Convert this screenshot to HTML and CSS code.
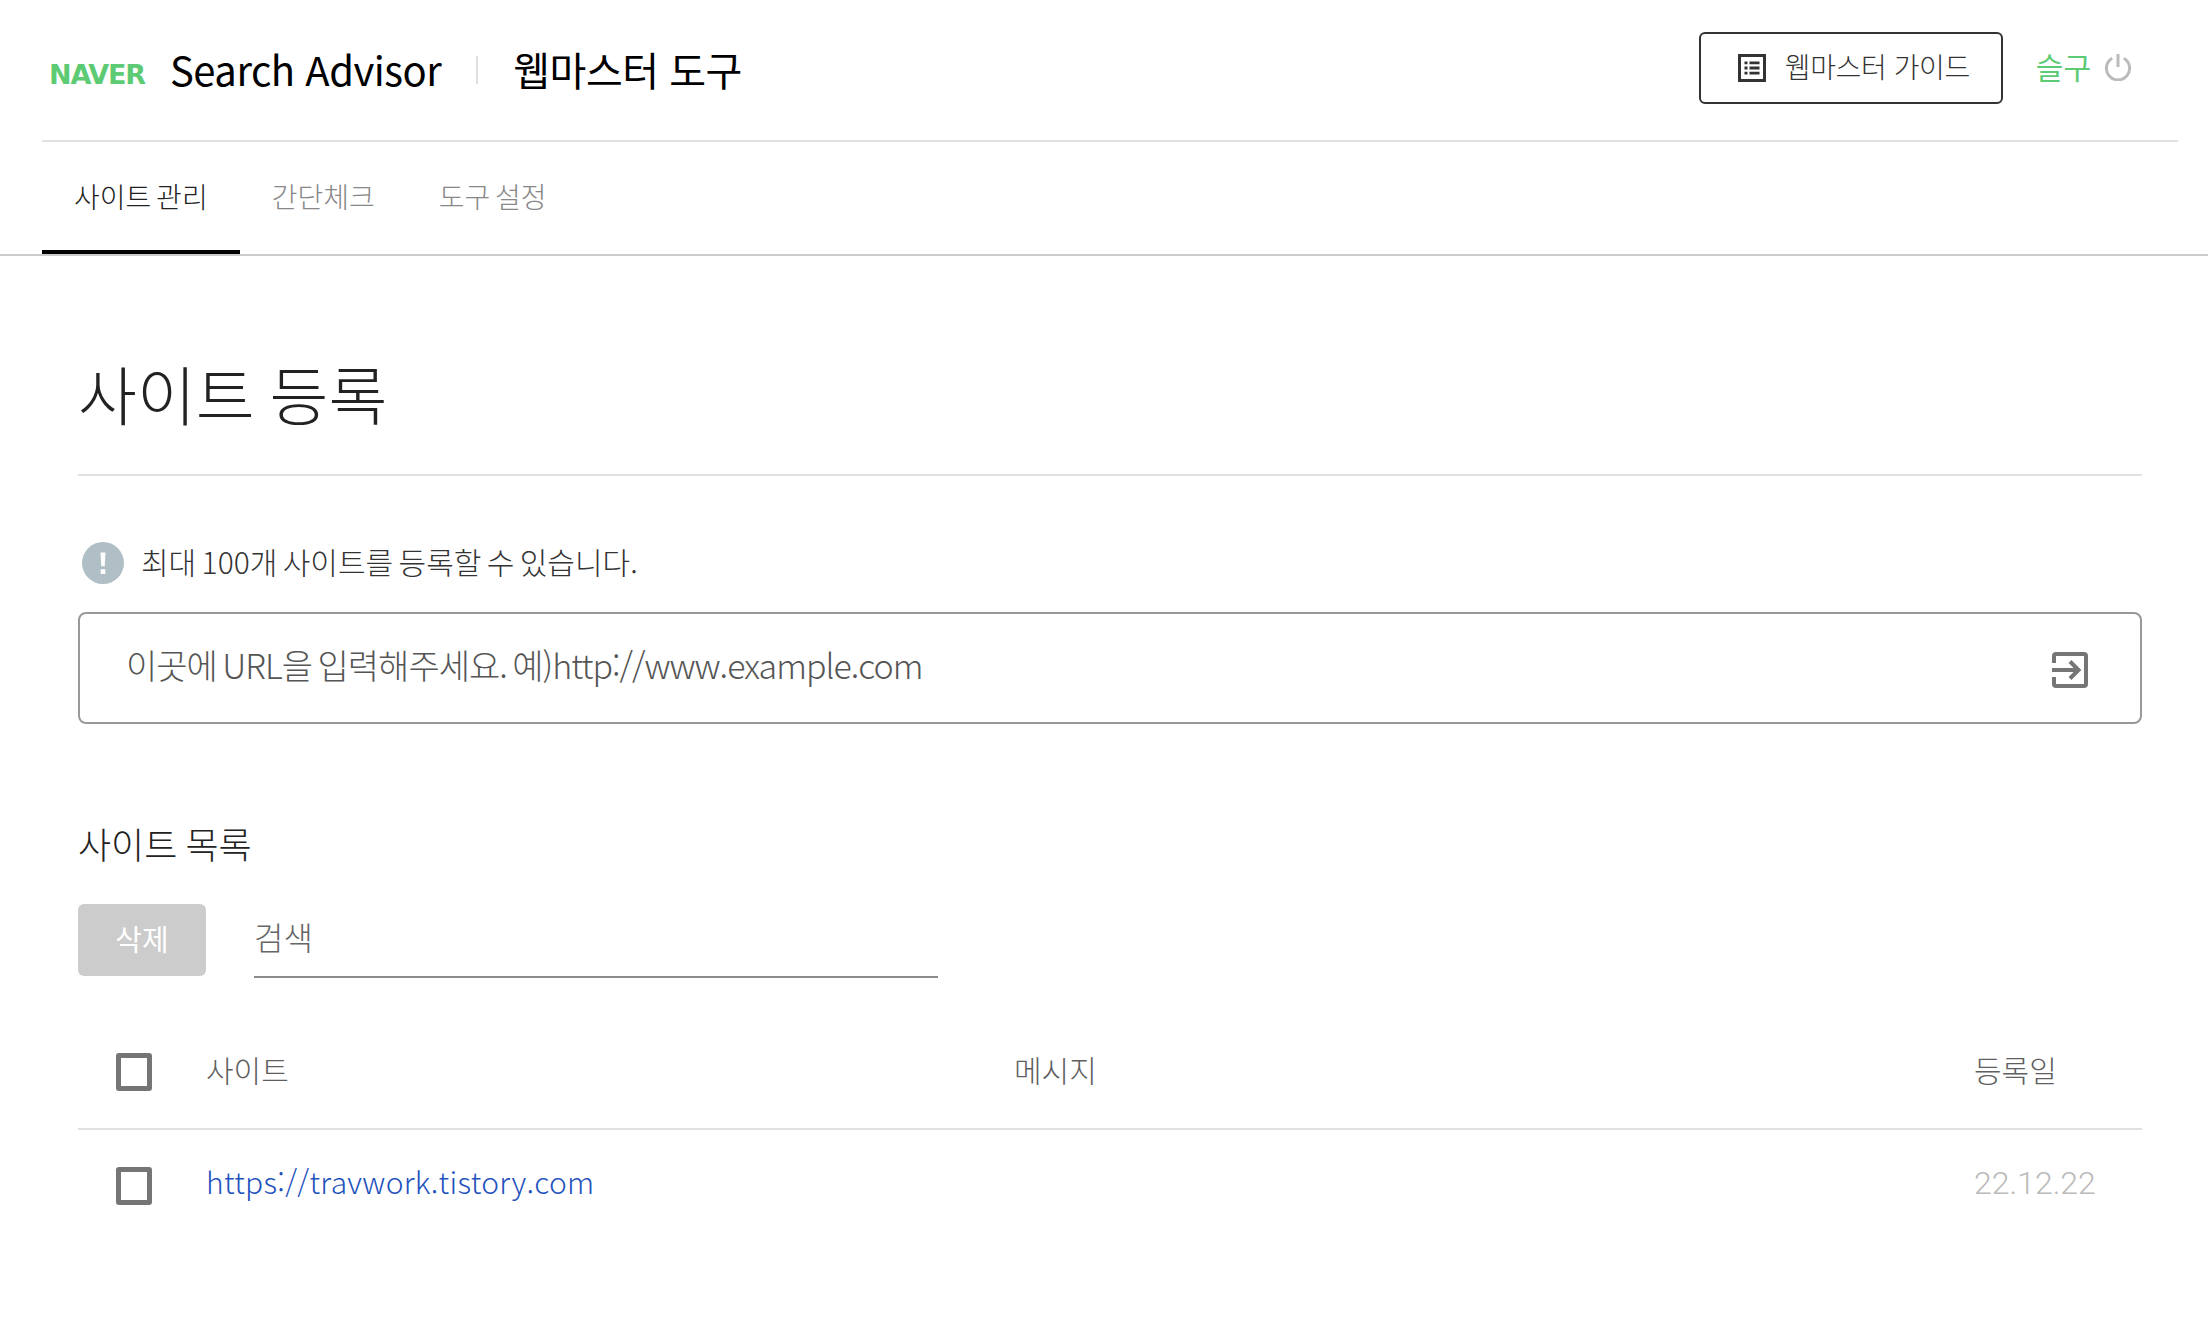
FILE: index.html
```html
<!DOCTYPE html>
<html lang="ko">
<head>
  <meta charset="UTF-8">
  <meta name="viewport" content="width=device-width, initial-scale=1.0">
  <title>Search Advisor</title>
  <link rel="stylesheet" href="styles.css">
</head>
<body>

  <header class="top">
    <div class="brand">
      <span class="naver">NAVER</span>
      <span class="service">Search Advisor</span>
      <span class="bar"></span>
      <span class="tool">웹마스터 도구</span>
    </div>
    <div class="account">
      <a class="guide" href="#">
        <svg class="guide-icon" viewBox="0 0 28 28" width="28" height="28">
          <rect x="1.500" y="1.500" width="25" height="25" fill="none" stroke="#333" stroke-width="3"/>
          <path d="M6.500 7.500h3v2.800h-3zM6.500 12.600h3v2.800h-3zM6.500 17.700h3v2.800h-3zM11.500 7.500h10v2.800h-10zM11.500 12.600h10v2.800h-10zM11.500 17.700h10v2.800h-10z" fill="#333"/>
        </svg>
        <span class="guide-text">웹마스터 가이드</span>
      </a>
      <span class="user">슬구</span>
      <svg class="power" viewBox="0 0 28 28" width="28" height="28">
        <path d="M8.200 5.200a11.600 11.600 0 1 0 11.600 0" fill="none" stroke="#bbb" stroke-width="3"/>
        <path d="M14 1v13" fill="none" stroke="#bbb" stroke-width="3"/>
      </svg>
    </div>
  </header>

  <nav class="tabs">
    <a class="tab active" href="#">사이트 관리</a>
    <a class="tab" href="#">간단체크</a>
    <a class="tab" href="#">도구 설정</a>
  </nav>

  <main class="content">
    <h1>사이트 등록</h1>

    <p class="notice">
      <svg class="notice-icon" viewBox="0 0 40 40" width="42" height="42">
        <circle cx="20" cy="20" r="20" fill="#b0bec5"/>
        <path d="M17.600 10h4.800l-.8 13h-3.200zM17.800 26h4.400v4.400h-4.400z" fill="#fff"/>
      </svg>
      최대 100개 사이트를 등록할 수 있습니다.
    </p>

    <div class="url-box">
      <input class="url-input" type="text" placeholder="이곳에 URL을 입력해주세요. 예)http://www.example.com">
      <svg class="url-icon" viewBox="0 0 36 36" width="36" height="36">
        <path d="M2 11V4a2 2 0 0 1 2-2h28a2 2 0 0 1 2 2v28a2 2 0 0 1-2 2H4a2 2 0 0 1-2-2v-7" fill="none" stroke="#757575" stroke-width="4"/>
        <path d="M0 18h26M18 9.500l8.500 8.500-8.500 8.500" fill="none" stroke="#757575" stroke-width="4"/>
      </svg>
    </div>

    <h2>사이트 목록</h2>

    <div class="actions">
      <button class="delete" type="button">삭제</button>
      <input class="search" type="text" placeholder="검색">
    </div>

    <div class="row head">
      <span class="check"></span>
      <span class="col-site">사이트</span>
      <span class="col-msg">메시지</span>
      <span class="col-date">등록일</span>
    </div>
    <div class="row">
      <span class="check"></span>
      <a class="col-site link" href="#">https://travwork.tistory.com</a>
      <span class="col-msg"></span>
      <span class="col-date date">22.12.22</span>
    </div>
  </main>

</body>
</html>
```

FILE: styles.css
```css
body {
  margin: 0;
  background-color: #fff;
  color: #222;
  font-family: "Noto Sans CJK KR", "Noto Sans", sans-serif;
  font-weight: 300;
}

a {
  text-decoration: none;
}

.top {
  display: flex;
  justify-content: space-between;
  align-items: center;
  height: 142px;
  margin: 0 30px 0 42px;
  padding: 0 0 4px 7px;
  box-sizing: border-box;
  border-bottom: 2px solid #e0e0e0;
}

.brand {
  display: flex;
  align-items: center;
}

.naver {
  width: 96px;
  margin-top: 12px;
  color: #5ccb74;
  font-family: "DejaVu Sans", sans-serif;
  font-size: 27px;
  font-weight: bold;
  letter-spacing: -1.2px;
}

.service,
.tool {
  margin-top: 2px;
  color: #000;
  font-size: 40px;
  font-weight: 400;
  letter-spacing: -0.5px;
}

.service {
  margin-left: 25px;
}

.bar {
  width: 2px;
  height: 28px;
  margin: 3px 35px 0;
  background-color: #e0e0e0;
}

.account {
  display: flex;
  align-items: center;
  padding-right: 46px;
}

.guide {
  display: flex;
  align-items: center;
  gap: 19px;
  box-sizing: border-box;
  width: 304px;
  height: 72px;
  padding-left: 37px;
  border: 2px solid #333;
  border-radius: 6px;
  color: #333;
  font-size: 28px;
}

.guide-text {
  padding-bottom: 5px;
  letter-spacing: -0.4px;
}

.user {
  margin: 0 0 5px 33px;
  color: #5ccb74;
  font-size: 30px;
  font-weight: 400;
}

.power {
  margin: 0 0 2px 13px;
}

.tabs {
  display: flex;
  height: 112px;
  padding-left: 42px;
  border-bottom: 2px solid #ccc;
}

.tab {
  display: flex;
  align-items: center;
  height: 112px;
  box-sizing: border-box;
  padding: 0 32px 4px;
  color: #888;
  font-size: 28px;
  word-spacing: -3px;
}

.tab.active {
  padding-bottom: 1px;
  color: #222;
  border-bottom: 4px solid #000;
  margin-bottom: -1px;
}

.content {
  margin: 0 66px 0 78px;
}

h1 {
  margin: 0;
  padding: 95px 0 41px;
  border-bottom: 2px solid #e0e0e0;
  color: #222;
  font-size: 64px;
  font-weight: 300;
  line-height: 82px;
  word-spacing: -3px;
}

.notice {
  display: flex;
  align-items: center;
  gap: 17px;
  height: 60px;
  margin: 55px 0 0 3px;
  color: #333;
  font-size: 30px;
  word-spacing: -3px;
}

.notice-icon {
  margin: 4px 0 0 1px;
}

.url-box {
  display: flex;
  align-items: center;
  justify-content: space-between;
  box-sizing: border-box;
  height: 112px;
  margin-top: 21px;
  padding: 0 52px 0 46px;
  border: 2px solid #999;
  border-radius: 8px;
}

.url-icon {
  margin-top: 3px;
}

.url-input {
  flex: 1;
  padding: 0 0 8px;
  border: none;
  outline: none;
  font-family: inherit;
  font-size: 34px;
  font-weight: 300;
  letter-spacing: -1px;
  word-spacing: -3px;
}

.url-input::placeholder {
  color: #555;
}

h2 {
  margin: 94px 0 0;
  color: #222;
  font-size: 36px;
  font-weight: 300;
  line-height: 50px;
  word-spacing: -2px;
}

.actions {
  display: flex;
  gap: 48px;
  margin-top: 36px;
}

.delete {
  width: 128px;
  height: 72px;
  padding: 0 0 5px;
  border: none;
  border-radius: 6px;
  background-color: #ccc;
  color: #fff;
  font-family: inherit;
  font-size: 29px;
  font-weight: 400;
}

.search {
  width: 684px;
  height: 74px;
  box-sizing: border-box;
  padding: 0 0 9px;
  border: none;
  border-bottom: 2px solid #8c8c8c;
  outline: none;
  font-family: inherit;
  font-size: 32px;
  font-weight: 300;
}

.search::placeholder {
  color: #666;
}

.row {
  display: flex;
  align-items: center;
  height: 108px;
  padding-left: 38px;
  font-size: 30px;
}

.row.head {
  height: 152px;
  padding-top: 37px;
  box-sizing: border-box;
  border-bottom: 2px solid #e0e0e0;
  color: #5f5f5f;
}

.check {
  width: 36px;
  height: 38px;
  box-sizing: border-box;
  margin-top: 3px;
  border: 5px solid #757575;
  border-radius: 3px;
}

.head .check {
  margin-top: 0;
}

.col-site {
  width: 808px;
  margin-left: 54px;
  padding-bottom: 7px;
  letter-spacing: 0.3px;
}

.col-msg {
  width: 960px;
  padding-bottom: 6px;
}

.col-date {
  padding-bottom: 3px;
}

.head .col-site,
.head .col-date {
  padding-bottom: 6px;
  letter-spacing: 0;
}

.link {
  color: #1f52bd;
}

.date {
  color: #bbb;
  font-family: Roboto, sans-serif;
  font-size: 32px;
}
```
